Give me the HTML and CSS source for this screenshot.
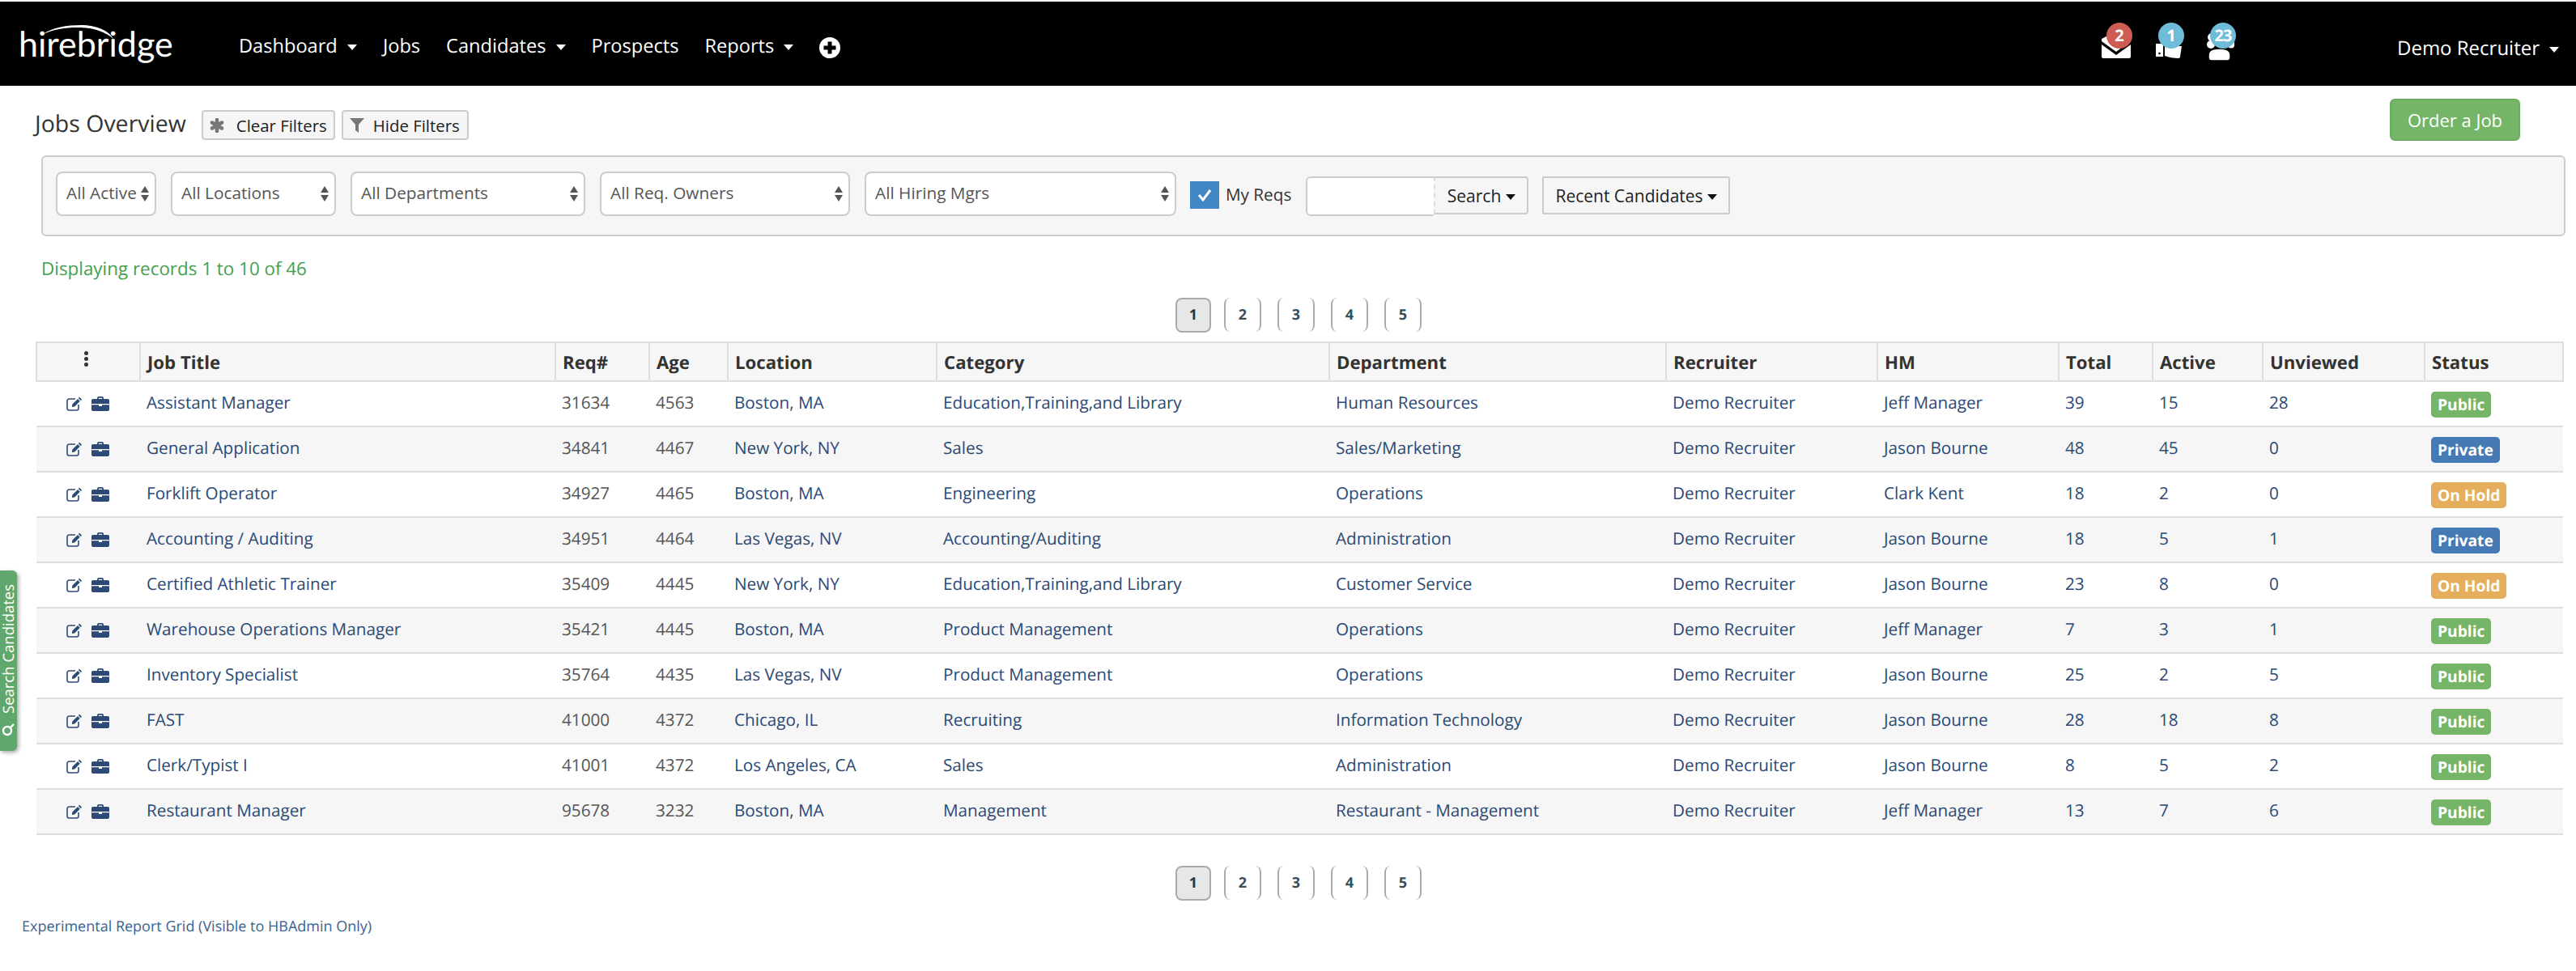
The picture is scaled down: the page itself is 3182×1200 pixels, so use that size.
FILE: index.html
```html
<!DOCTYPE html>
<html lang="en">
<head>
<meta charset="UTF-8">
<title>Jobs Overview</title>
<link rel="stylesheet" href="styles.css">
</head>
<body>

<svg class="sprites" width="0" height="0">
    <symbol id="i-edit" viewBox="0 0 20 18">
        <path d="M15 10v4.500a2.500 2.500 0 0 1-2.500 2.500H3.500A2.500 2.500 0 0 1 1 14.500V5.500A2.500 2.500 0 0 1 3.500 3H11" fill="none" stroke="currentColor" stroke-width="1.600"/>
        <path d="M16.200 0.800l2.800 2.800-1.300 1.300-2.800-2.800zM14 3l2.800 2.800-6.600 6.600-3.400 0.600 0.600-3.400z" fill="currentColor"/>
    </symbol>
    <symbol id="i-case" viewBox="0 0 22 18">
        <path d="M7 3V2a2 2 0 0 1 2-2h4a2 2 0 0 1 2 2v1h5a2 2 0 0 1 2 2v4H0V5a2 2 0 0 1 2-2zM8.800 3h4.400V1.800H8.800z" fill="currentColor" fill-rule="evenodd"/>
        <path d="M0 10.200h9v1.800h4v-1.800h9V16a2 2 0 0 1-2 2H2a2 2 0 0 1-2-2z" fill="currentColor"/>
    </symbol>
</svg>

<nav class="topbar">
    <a class="logo">
        <svg class="logo-arc" viewBox="0 0 87 17"><path d="M0 11C12 3 30 0 47 0C66 0 82 7 87 17C78 9 64 3.500 47 3C30 2.500 14 5 0 11z" fill="#fff"/></svg>
        hirebridge
    </a>
    <ul class="menu">
        <li>Dashboard <b class="caret"></b></li>
        <li>Jobs</li>
        <li>Candidates <b class="caret"></b></li>
        <li>Prospects</li>
        <li>Reports <b class="caret"></b></li>
        <li class="plus-item">
            <svg class="plus" viewBox="0 0 26 26"><circle cx="13" cy="13" r="13" fill="#fff"/><path d="M10.500 5.500h5v5h5v5h-5v5h-5v-5h-5v-5h5z" fill="#000"/></svg>
        </li>
    </ul>
    <div class="alerts">
        <div class="alert alert-mail">
            <svg viewBox="0 0 36 29"><path d="M0 12L18 25L36 12V27a2 2 0 0 1-2 2H2a2 2 0 0 1-2-2z" fill="#fff"/><path d="M0 5L10 0L30 12L18 21L0 8z" fill="#fff"/></svg>
            <span class="badge badge-red">2</span>
        </div>
        <div class="alert alert-hand">
            <svg viewBox="0 0 32 18"><path d="M0 0h9v16H0z" fill="#fff"/><path d="M11 3h21l-2 13a2 2 0 0 1-2 2c-6 0-12-1-17-3z" fill="#fff"/><circle cx="4.500" cy="12" r="1.300" fill="#000"/></svg>
            <span class="badge badge-blue">1</span>
        </div>
        <div class="alert alert-users">
            <svg viewBox="0 0 38 35"><circle cx="10" cy="6" r="5" fill="#fff"/><circle cx="9" cy="15" r="5" fill="#fff"/><circle cx="34" cy="15" r="4.500" fill="#fff"/><path d="M6 28c0-5 5-8 13.500-8s13.500 3 13.500 8v3a4 4 0 0 1-4 4H10a4 4 0 0 1-4-4z" fill="#fff" stroke="#000" stroke-width="1.500"/></svg>
            <span class="badge badge-blue">23</span>
        </div>
    </div>
    <div class="user">Demo Recruiter <b class="caret"></b></div>
</nav>

<div class="page-head">
    <h1>Jobs Overview</h1>
    <button class="btn btn-tool btn-clear">
        <svg class="star" viewBox="0 0 18 18"><path d="M9 2v14M3 5.500l12 7M15 5.500l-12 7" stroke="#777" stroke-width="4.500" stroke-linecap="round"/></svg>Clear Filters
    </button>
    <button class="btn btn-tool btn-hide">
        <svg class="funnel" viewBox="0 0 18 18"><path d="M0 0h18L11 8v10L7 15V8z" fill="#777"/></svg>Hide Filters
    </button>
    <button class="btn btn-order">Order a Job</button>
</div>

<form class="filters">
    <div class="select select-active"><select><option>All Active</option></select></div>
    <div class="select select-loc"><select><option>All Locations</option></select></div>
    <div class="select select-dept"><select><option>All Departments</option></select></div>
    <div class="select select-owner"><select><option>All Req. Owners</option></select></div>
    <div class="select select-mgr"><select><option>All Hiring Mgrs</option></select></div>
    <label class="check">
        <span class="check-box"><svg viewBox="0 0 18 16"><path d="M2 8l5 6 9-12" fill="none" stroke="#fff" stroke-width="3"/></svg></span>
        My Reqs
    </label>
    <div class="search">
        <input type="text">
        <button type="button" class="btn-search">Search <b class="caret caret-dark"></b></button>
    </div>
    <button type="button" class="btn-recent">Recent Candidates <b class="caret caret-dark"></b></button>
</form>

<p class="records">Displaying records 1 to 10 of 46</p>

<div class="pager">
    <a class="current">1</a><a>2</a><a>3</a><a>4</a><a>5</a>
</div>

<table class="jobs">
    <colgroup>
        <col class="c-tools"><col class="c-title"><col class="c-req"><col class="c-age">
        <col class="c-loc"><col class="c-cat"><col class="c-dept"><col class="c-rec">
        <col class="c-hm"><col class="c-total"><col class="c-active"><col class="c-unv"><col>
    </colgroup>
    <thead>
        <tr>
            <th class="tools-head"><span class="kebab"><i></i><i></i><i></i></span></th>
            <th>Job Title</th><th>Req#</th><th>Age</th><th>Location</th><th>Category</th><th>Department</th>
            <th>Recruiter</th><th>HM</th><th>Total</th><th>Active</th><th>Unviewed</th><th>Status</th>
        </tr>
    </thead>
    <tbody>
        <tr>
            <td class="tools"><svg class="edit"><use href="#i-edit"/></svg><svg class="case"><use href="#i-case"/></svg></td>
            <td>Assistant Manager</td><td class="grey">31634</td><td class="grey">4563</td><td>Boston, MA</td>
            <td>Education,Training,and Library</td><td>Human Resources</td><td>Demo Recruiter</td><td>Jeff Manager</td>
            <td>39</td><td>15</td><td>28</td><td class="state"><span class="label public">Public</span></td>
        </tr>
        <tr>
            <td class="tools"><svg class="edit"><use href="#i-edit"/></svg><svg class="case"><use href="#i-case"/></svg></td>
            <td>General Application</td><td class="grey">34841</td><td class="grey">4467</td><td>New York, NY</td>
            <td>Sales</td><td>Sales/Marketing</td><td>Demo Recruiter</td><td>Jason Bourne</td>
            <td>48</td><td>45</td><td>0</td><td class="state"><span class="label private">Private</span></td>
        </tr>
        <tr>
            <td class="tools"><svg class="edit"><use href="#i-edit"/></svg><svg class="case"><use href="#i-case"/></svg></td>
            <td>Forklift Operator</td><td class="grey">34927</td><td class="grey">4465</td><td>Boston, MA</td>
            <td>Engineering</td><td>Operations</td><td>Demo Recruiter</td><td>Clark Kent</td>
            <td>18</td><td>2</td><td>0</td><td class="state"><span class="label hold">On Hold</span></td>
        </tr>
        <tr>
            <td class="tools"><svg class="edit"><use href="#i-edit"/></svg><svg class="case"><use href="#i-case"/></svg></td>
            <td>Accounting / Auditing</td><td class="grey">34951</td><td class="grey">4464</td><td>Las Vegas, NV</td>
            <td>Accounting/Auditing</td><td>Administration</td><td>Demo Recruiter</td><td>Jason Bourne</td>
            <td>18</td><td>5</td><td>1</td><td class="state"><span class="label private">Private</span></td>
        </tr>
        <tr>
            <td class="tools"><svg class="edit"><use href="#i-edit"/></svg><svg class="case"><use href="#i-case"/></svg></td>
            <td>Certified Athletic Trainer</td><td class="grey">35409</td><td class="grey">4445</td><td>New York, NY</td>
            <td>Education,Training,and Library</td><td>Customer Service</td><td>Demo Recruiter</td><td>Jason Bourne</td>
            <td>23</td><td>8</td><td>0</td><td class="state"><span class="label hold">On Hold</span></td>
        </tr>
        <tr>
            <td class="tools"><svg class="edit"><use href="#i-edit"/></svg><svg class="case"><use href="#i-case"/></svg></td>
            <td>Warehouse Operations Manager</td><td class="grey">35421</td><td class="grey">4445</td><td>Boston, MA</td>
            <td>Product Management</td><td>Operations</td><td>Demo Recruiter</td><td>Jeff Manager</td>
            <td>7</td><td>3</td><td>1</td><td class="state"><span class="label public">Public</span></td>
        </tr>
        <tr>
            <td class="tools"><svg class="edit"><use href="#i-edit"/></svg><svg class="case"><use href="#i-case"/></svg></td>
            <td>Inventory Specialist</td><td class="grey">35764</td><td class="grey">4435</td><td>Las Vegas, NV</td>
            <td>Product Management</td><td>Operations</td><td>Demo Recruiter</td><td>Jason Bourne</td>
            <td>25</td><td>2</td><td>5</td><td class="state"><span class="label public">Public</span></td>
        </tr>
        <tr>
            <td class="tools"><svg class="edit"><use href="#i-edit"/></svg><svg class="case"><use href="#i-case"/></svg></td>
            <td>FAST</td><td class="grey">41000</td><td class="grey">4372</td><td>Chicago, IL</td>
            <td>Recruiting</td><td>Information Technology</td><td>Demo Recruiter</td><td>Jason Bourne</td>
            <td>28</td><td>18</td><td>8</td><td class="state"><span class="label public">Public</span></td>
        </tr>
        <tr>
            <td class="tools"><svg class="edit"><use href="#i-edit"/></svg><svg class="case"><use href="#i-case"/></svg></td>
            <td>Clerk/Typist I</td><td class="grey">41001</td><td class="grey">4372</td><td>Los Angeles, CA</td>
            <td>Sales</td><td>Administration</td><td>Demo Recruiter</td><td>Jason Bourne</td>
            <td>8</td><td>5</td><td>2</td><td class="state"><span class="label public">Public</span></td>
        </tr>
        <tr>
            <td class="tools"><svg class="edit"><use href="#i-edit"/></svg><svg class="case"><use href="#i-case"/></svg></td>
            <td>Restaurant Manager</td><td class="grey">95678</td><td class="grey">3232</td><td>Boston, MA</td>
            <td>Management</td><td>Restaurant - Management</td><td>Demo Recruiter</td><td>Jeff Manager</td>
            <td>13</td><td>7</td><td>6</td><td class="state"><span class="label public">Public</span></td>
        </tr>
    </tbody>
</table>

<div class="pager pager-bottom">
    <a class="current">1</a><a>2</a><a>3</a><a>4</a><a>5</a>
</div>

<a class="report-link">Experimental Report Grid (Visible to HBAdmin Only)</a>

<div class="side-tab">
    <svg viewBox="0 0 16 16"><circle cx="7" cy="7" r="5" fill="none" stroke="#fff" stroke-width="2.400"/><path d="M11 11l4 4" stroke="#fff" stroke-width="2.400"/></svg>
    Search Candidates
</div>

</body>
</html>
```

FILE: styles.css
```css
body {
    margin: 0;
    font-family: "Open Sans", sans-serif;
    font-size: 20.7px;
    color: #333;
    background-color: #fff;
    text-rendering: geometricPrecision;
}
.sprites {
    position: absolute;
}

/* top bar */
.topbar {
    display: flex;
    align-items: center;
    height: 104px;
    margin-top: 2px;
    padding-left: 23px;
    background-color: #000;
    color: #fff;
}
.logo {
    position: relative;
    width: 272px;
    margin-top: 2px;
    font-family: Lato, sans-serif;
    font-weight: 400;
    font-size: 43px;
    line-height: 56px;
    color: #fff;
}
.logo-arc {
    position: absolute;
    left: 30px;
    top: 4px;
    width: 87px;
    height: 17px;
}
.menu {
    display: flex;
    align-items: center;
    gap: 32px;
    margin: 4px 0 0;
    padding: 0;
    list-style: none;
    font-size: 23.6px;
}
.caret {
    display: inline-block;
    width: 0;
    height: 0;
    margin-left: 6px;
    vertical-align: middle;
    border-top: 7px solid #fff;
    border-left: 6px solid transparent;
    border-right: 6px solid transparent;
}
.caret-dark {
    margin-left: 0;
    border-top-color: #111;
}
.plus-item {
    display: flex;
    margin-top: 6px;
}
.plus {
    width: 26px;
    height: 26px;
}
.alerts {
    display: flex;
    align-self: flex-start;
    margin-top: 38px;
    margin-left: auto;
    height: 48px;
}
.alert {
    position: relative;
}
.alert svg {
    position: absolute;
    display: block;
}
.alert-mail {
    width: 67px;
}
.alert-mail svg {
    left: 0;
    top: 3px;
    width: 36px;
    height: 29px;
}
.alert-hand {
    width: 59px;
}
.alert-hand svg {
    left: 0;
    top: 14px;
    width: 32px;
    height: 18px;
}
.alert-users {
    width: 239px;
}
.alert-users svg {
    left: 0;
    top: 0;
    width: 38px;
    height: 35px;
}
.badge {
    position: absolute;
    top: -12px;
    width: 32px;
    height: 32px;
    border-radius: 50%;
    font-size: 20px;
    font-weight: 700;
    line-height: 32px;
    text-align: center;
    color: #fff;
}
.badge-red {
    left: 6px;
    background-color: #cd5c54;
}
.badge-blue {
    left: 3px;
    background-color: #6fbcda;
}
.alert-users .badge {
    left: 8px;
    letter-spacing: -1px;
}
.user {
    width: 221px;
    margin-top: 10px;
    font-size: 24px;
    white-space: nowrap;
}

/* heading row */
.page-head {
    display: flex;
    align-items: flex-end;
    height: 52px;
    margin-top: 16px;
    padding: 0 69px 0 43px;
}
h1 {
    margin: 0 19px 1px 0;
    font-size: 28.5px;
    font-weight: 400;
    line-height: 40px;
}
.btn {
    font-family: inherit;
    font-size: 20.4px;
    border-radius: 4px;
}
.btn-tool {
    display: flex;
    align-items: center;
    box-sizing: border-box;
    height: 37px;
    margin: 0 8px 1px 0;
    padding: 0 8px;
    color: #222;
    background-color: #f5f5f5;
    border: 2px solid #ccc;
    white-space: nowrap;
}
.btn-clear { width: 165px; }
.btn-hide { width: 157px; }
.star {
    flex: none;
    width: 18px;
    height: 18px;
    margin-right: 15px;
}
.funnel {
    flex: none;
    width: 18px;
    height: 18px;
    margin-right: 11px;
}
.btn-order {
    width: 161px;
    height: 52px;
    margin-left: auto;
    font-size: 22px;
    color: #fff;
    background-color: #74b567;
    border: 2px solid #6cae5f;
    border-radius: 6px;
}

/* filter panel */
.filters {
    display: flex;
    align-items: flex-start;
    height: 96px;
    margin: 18px 13px 0 51px;
    padding: 0 16px;
    background-color: #f6f6f6;
    border: 2px solid #ccc;
    border-radius: 6px;
}
.select {
    position: relative;
    height: 55px;
    margin-top: 18px;
    margin-right: 18px;
}
.select::before,
.select::after {
    content: '';
    position: absolute;
    right: 9px;
    border-left: 5px solid transparent;
    border-right: 5px solid transparent;
}
.select::before {
    top: 18px;
    border-bottom: 8px solid #555;
}
.select::after {
    top: 29px;
    border-top: 8px solid #555;
}
.select select {
    width: 100%;
    height: 100%;
    padding: 0 11px 3px;
    font-family: inherit;
    font-size: 20.8px;
    color: #555;
    background-color: #fff;
    border: 2px solid #ccc;
    border-radius: 8px;
    appearance: none;
}
.select-active { width: 124px; }
.select-loc { width: 204px; }
.select-dept { width: 290px; }
.select-owner { width: 309px; }
.select-mgr { width: 385px; margin-right: 17px; }
.check {
    display: flex;
    align-items: center;
    height: 34px;
    margin-top: 30px;
    color: #333;
}
.check-box {
    display: flex;
    align-items: center;
    justify-content: center;
    width: 36px;
    height: 34px;
    margin-right: 8px;
    background-color: #4186c5;
}
.check-box svg {
    width: 18px;
    height: 16px;
}
.search {
    display: flex;
    align-items: flex-start;
    margin: 24px 17px 0 18px;
}
.search input {
    box-sizing: border-box;
    width: 158px;
    height: 49px;
    padding: 0 10px;
    background-color: #fff;
    border: 2px solid #ccc;
    border-right: none;
    border-radius: 6px 0 0 6px;
}
.btn-search,
.btn-recent {
    height: 47px;
    font-family: inherit;
    font-size: 21px;
    color: #222;
    background-color: #f6f6f6;
    border: 2px solid #ccc;
}
.btn-search {
    width: 117px;
    padding: 0;
    border-left: 2px dashed #ddd;
    border-radius: 0 4px 4px 0;
}
.btn-recent {
    width: 232px;
    margin-top: 24px;
    padding: 0;
    border-radius: 2px;
}

.records {
    margin: 26px 0 0 51px;
    font-size: 22.4px;
    line-height: 28px;
    color: #45a04f;
}

/* paging */
.pager {
    display: flex;
    justify-content: center;
    gap: 20px;
    margin: 22px 0 0 26px;
    height: 43px;
}
.pager a {
    box-sizing: border-box;
    width: 46px;
    height: 42px;
    font-size: 18px;
    font-weight: 700;
    line-height: 42px;
    text-align: center;
    color: #36505a;
    border-left: 2px solid #aaa;
    border-right: 2px solid #aaa;
    border-radius: 8px;
}
.pager .current {
    width: 44px;
    height: 43px;
    margin-right: -4px;
    line-height: 39px;
    color: #333;
    background-color: #e7e7e7;
    border: 2px solid #aaa;
}
.pager-bottom {
    margin-top: 38px;
}

/* jobs table */
.jobs {
    width: 3123px;
    margin: 11px 0 0 44px;
    table-layout: fixed;
    border-collapse: collapse;
}
.c-tools { width: 128px; }
.c-title { width: 513px; }
.c-req { width: 116px; }
.c-age { width: 97px; }
.c-loc { width: 258px; }
.c-cat { width: 485px; }
.c-dept { width: 416px; }
.c-rec { width: 261px; }
.c-hm { width: 224px; }
.c-total { width: 116px; }
.c-active { width: 136px; }
.c-unv { width: 200px; }
.jobs th {
    height: 46px;
    padding: 0 8px;
    font-size: 22.2px;
    font-weight: 700;
    text-align: left;
    color: #333;
    background-color: #f6f6f6;
    border: 2px solid #ddd;
}
.jobs td {
    height: 51px;
    padding: 0 8px 3px;
    color: #2b4a75;
    border-bottom: 2px solid #ddd;
    white-space: nowrap;
}
.jobs tbody tr:nth-child(even) {
    background-color: #f6f6f6;
}
.jobs .grey {
    color: #555;
}
.kebab {
    display: flex;
    flex-direction: column;
    align-items: center;
    gap: 2px;
    margin: 0 6px 8px 0;
}
.kebab i {
    width: 5px;
    height: 5px;
    border-radius: 50%;
    background-color: #333;
}
.jobs .tools {
    padding: 0 8px 2px 37px;
}
.jobs .state {
    padding-bottom: 0;
}
.tools svg {
    display: inline-block;
    vertical-align: middle;
    color: #2b4a75;
}
.edit {
    width: 20px;
    height: 18px;
    margin-right: 11px;
}
.case {
    width: 22px;
    height: 18px;
}
.label {
    display: inline-block;
    height: 32px;
    margin-top: 2px;
    padding: 0 8px;
    font-size: 19.2px;
    font-weight: 700;
    line-height: 32px;
    color: #fff;
    border-radius: 5px;
}
.public { background-color: #74b567; }
.private { background-color: #467ab4; }
.hold { background-color: #e6ae5c; }

.report-link {
    display: block;
    margin: 19px 0 0 27px;
    font-size: 18px;
    line-height: 26px;
    color: #3c6291;
}

/* tab stuck to the left edge */
.side-tab {
    position: absolute;
    left: 0;
    top: 705px;
    display: flex;
    align-items: center;
    gap: 12px;
    box-sizing: border-box;
    width: 21px;
    height: 223px;
    padding-top: 18px;
    writing-mode: vertical-rl;
    transform: rotate(180deg);
    font-size: 18.5px;
    line-height: 21px;
    color: #fff;
    background-color: #60a76e;
    border-radius: 6px 0 0 6px;
    box-shadow: -2px -2px 5px rgba(0, 0, 0, 0.35);
    white-space: nowrap;
}
.side-tab svg {
    flex: none;
    width: 16px;
    height: 16px;
    transform: rotate(90deg);
}
```
